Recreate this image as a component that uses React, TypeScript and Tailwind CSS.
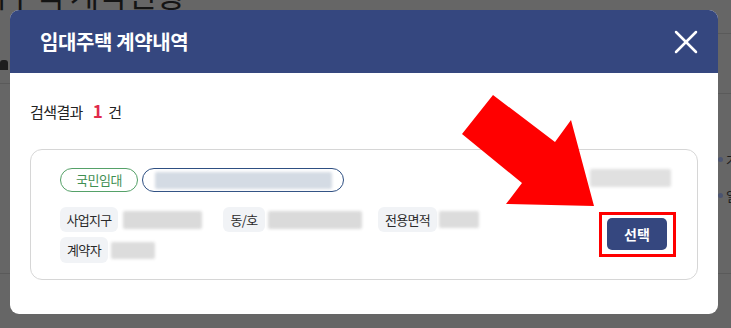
import {X} from "lucide-react";

// Soft grey box standing in for masked (blurred) personal data.
function Masked({className}: {className: string}) {
    return <span className={"block shrink-0 rounded-[2px] blur-[1.5px] " + className} />;
}

function Label({className, children}: {className: string; children: string}) {
    return (
        <span
            className={
                "flex shrink-0 items-center justify-center rounded-[6px] bg-[#f1f3f6] text-[13px] tracking-[-0.05em] text-[#2a2a2a] " +
                className
            }
        >
            {children}
        </span>
    );
}

export default function App() {
    return (
        <div className="relative h-[328px] w-[731px] overflow-hidden bg-[#666666] font-['Noto_Sans_CJK_KR','Noto_Sans',sans-serif]">
            {/* dimmed page behind the dialog */}
            <div className="pointer-events-none absolute inset-0">
                <h1 className="-ml-[52px] -mt-[23px] whitespace-nowrap text-[32px] leading-none tracking-[-0.02em] text-[#141414]">
                    임대주택 계약현황
                </h1>
                <div className="absolute left-0 top-[83px] h-px w-[10px] bg-[#5a5a5a]" />
                <div className="absolute left-0 top-[273px] h-px w-[10px] bg-[#5a5a5a]" />
                <div className="absolute left-0 top-[60px] h-[10px] w-[8px] rounded-t-[3px] bg-[#1e1e1e]" />
                <div className="absolute right-0 top-[33px] h-px w-[13px] bg-[#5a5a5a]" />
                <div className="absolute right-0 top-[93px] h-px w-[13px] bg-[#5a5a5a]" />
                <div className="absolute right-0 top-[273px] h-px w-[13px] bg-[#5a5a5a]" />
                <div className="absolute left-[718px] top-[150px] flex items-center gap-[3px] text-[13px] text-[#1e1e1e]">
                    <span className="h-[5px] w-[5px] rounded-full bg-[#4b5470]" />
                    <span>가</span>
                </div>
                <div className="absolute left-[718px] top-[186px] flex items-center gap-[3px] text-[13px] text-[#1e1e1e]">
                    <span className="h-[5px] w-[5px] rounded-full bg-[#4b5470]" />
                    <span>일</span>
                </div>
            </div>

            <div className="relative pl-[10px] pt-[10px]">
                <section className="flex h-[304px] w-[708px] flex-col overflow-hidden rounded-[9px] bg-white">
                    <header className="flex h-[63px] shrink-0 items-center justify-between bg-[#35477f] pl-[30px] pr-[12px]">
                        <h2 className="text-[20px] font-bold tracking-[-0.02em] text-white">임대주택 계약내역</h2>
                        <X className="size-[40px] text-white" strokeWidth={1.5} />
                    </header>

                    <div className="px-5 pt-[27px]">
                        <p className="flex h-[22px] items-baseline text-[15px] leading-[22px] tracking-[-0.04em] text-[#222]">
                            <span>검색결과</span>
                            <b className="ml-[10px] text-[17px] font-bold text-[#e02a4c]">1</b>
                            <span className="ml-[6px]">건</span>
                        </p>

                        <div className="mt-[27px] flex rounded-[12px] border border-[#d6d6d6] pb-[16px] pl-[29px] pr-[26px] pt-[18px]">
                            <div className="flex-1">
                                <div className="flex items-center gap-[4px]">
                                    <span className="flex h-[24px] w-[78px] items-center justify-center rounded-full border border-[#55a168] text-[13px] tracking-[-0.04em] text-[#3f8f52]">
                                        국민임대
                                    </span>
                                    <span className="flex h-[24px] w-[202px] items-center rounded-full border-[1.5px] border-[#2e4f82] px-[12px]">
                                        <Masked className="h-[17px] w-[177px] bg-[#d4dbe4]" />
                                    </span>
                                </div>

                                <div className="mt-[15px] flex h-[25px] items-center">
                                    <div className="flex w-[163px] items-center gap-[5px]">
                                        <Label className="h-[25px] w-[58px]">사업지구</Label>
                                        <Masked className="h-[18px] w-[79px] bg-[#dadada]" />
                                    </div>
                                    <div className="flex w-[155px] items-center gap-[3px]">
                                        <Label className="h-[25px] w-[42px]">동/호</Label>
                                        <Masked className="h-[18px] w-[94px] bg-[#dadada]" />
                                    </div>
                                    <div className="flex items-center gap-[2px]">
                                        <Label className="h-[25px] w-[59px]">전용면적</Label>
                                        <Masked className="h-[17px] w-[40px] bg-[#dcdcdc]" />
                                    </div>
                                </div>

                                <div className="mt-[5px] flex h-[26px] items-center gap-[3px]">
                                    <Label className="h-[26px] w-[48px]">계약자</Label>
                                    <Masked className="h-[17px] w-[44px] bg-[#dcdcdc]" />
                                </div>
                            </div>

                            <div className="flex w-[81px] flex-col">
                                <Masked className="mt-[1px] h-[18px] w-[81px] bg-[#e0e0e0]" />
                                <div className="relative mr-[4px] mt-[31px] self-end">
                                    <button className="flex h-[32px] w-[60px] items-center justify-center rounded-[5px] bg-[#35477f] text-[14px] font-bold text-white">
                                        선택
                                    </button>
                                    <span className="pointer-events-none absolute -bottom-[7px] -left-[8px] -right-[9px] -top-[6px] border-[3px] border-[#ff0000]" />
                                </div>
                            </div>
                        </div>
                    </div>
                </section>
            </div>

            {/* annotation arrow */}
            <svg className="pointer-events-none absolute inset-0" width="731" height="328" viewBox="0 0 731 328">
                <polygon
                    points="493,95 555,142 571,120 594,206 506,204 522,183 462,134"
                    fill="#ff0000"
                />
            </svg>
        </div>
    );
}
